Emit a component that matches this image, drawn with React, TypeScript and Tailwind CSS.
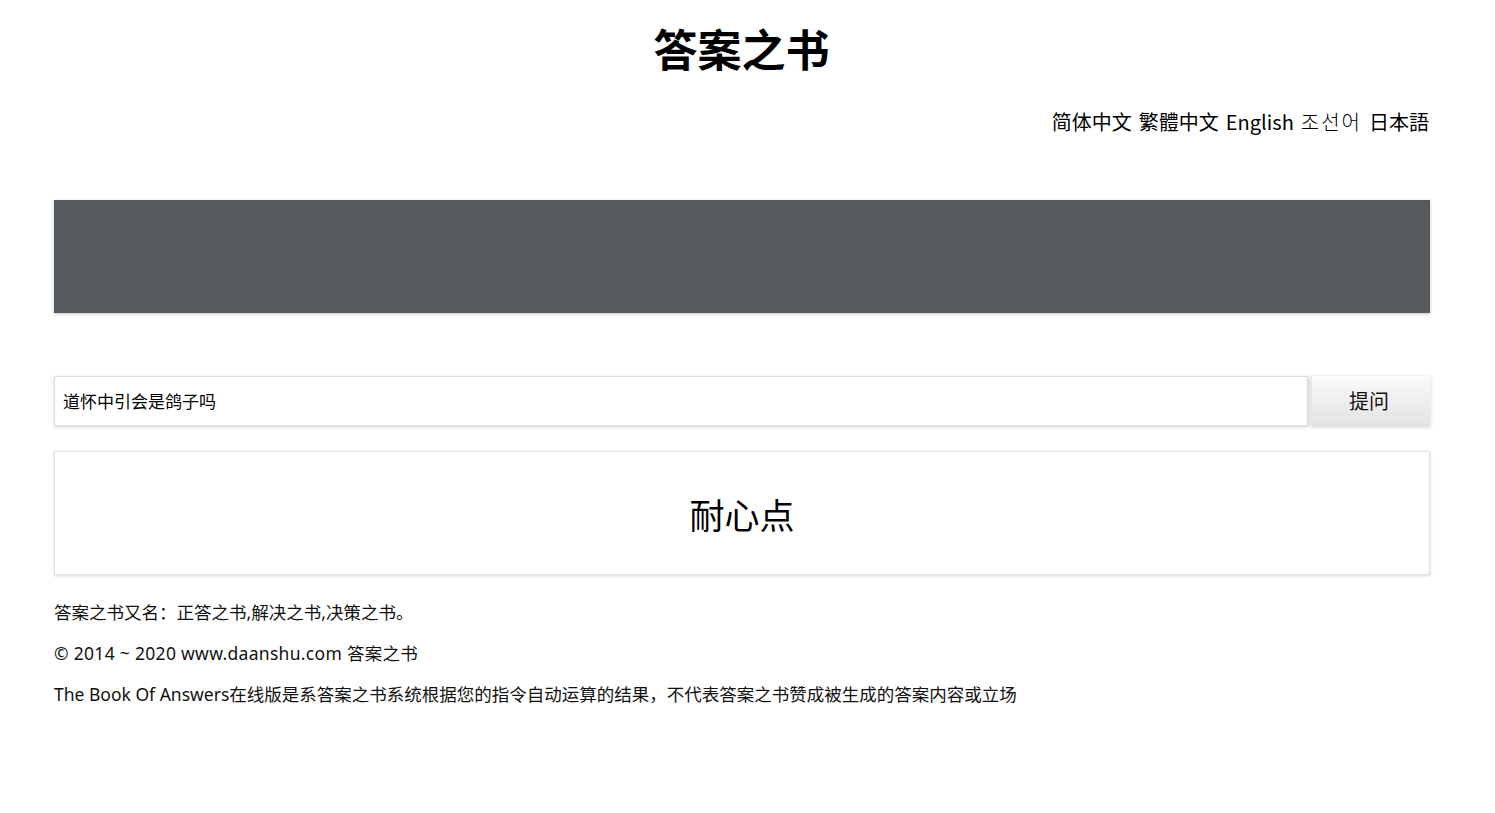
import React from "react";

const cjk = { fontFamily: '"Noto Sans CJK SC", "Noto Sans", sans-serif' };
const mixed = { fontFamily: '"Noto Sans", "Noto Sans CJK SC", sans-serif' };

export default function App() {
  return (
    <div className="w-[1483px] bg-white text-black" style={cjk}>
      <div className="h-[96px] flex items-center justify-center">
        <h1 className="text-[44px] font-bold leading-none">答案之书</h1>
      </div>
      <div className="h-[52px] flex items-center justify-end pr-[54px] gap-[7px] text-[20px] leading-none">
        <a>简体中文</a>
        <a>繁體中文</a>
        <a>English</a>
        <a style={{ fontFamily: '"Noto Sans CJK KR", sans-serif' }} className="font-light tracking-[2px]">조선어</a>
        <a style={{ fontFamily: '"Noto Sans CJK JP", sans-serif' }}>日本語</a>
      </div>
      <div className="mx-[54px] w-[1376px]">
        <div className="mt-[52px] h-[113px] bg-[#575a5d] shadow-[0_1px_3px_rgba(0,0,0,0.25)]" />
        <div className="mt-[63px] h-[50px] flex">
          <div className="flex-1 border border-[#dedede] shadow-[0_1px_3px_rgba(0,0,0,0.18)] flex items-center pl-[8px] text-[17px]">
            道怀中引会是鸽子吗
          </div>
          <button className="ml-[2px] w-[120px] h-[50px] bg-gradient-to-b from-[#fbfbfb] to-[#e2e2e2] border-l-2 border-[#e8e8e8] shadow-[0_1px_4px_rgba(0,0,0,0.2)] text-[20px] text-[#111] pr-[4px]">
            提问
          </button>
        </div>
        <div className="mt-[25px] h-[124px] border border-[#e2e2e2] shadow-[0_1px_3px_rgba(0,0,0,0.15)] flex items-center justify-center text-[35px] leading-none">
          耐心点
        </div>
        <div className="mt-[17px] text-[17.5px] leading-[41px] text-[#111]" style={mixed}>
          <p>答案之书又名：正答之书,解决之书,决策之书。</p>
          <p className="tracking-[0.3px]">© 2014 ~ 2020 www.daanshu.com 答案之书</p>
          <p>The Book Of Answers在线版是系答案之书系统根据您的指令自动运算的结果，不代表答案之书赞成被生成的答案内容或立场</p>
        </div>
      </div>
    </div>
  );
}
